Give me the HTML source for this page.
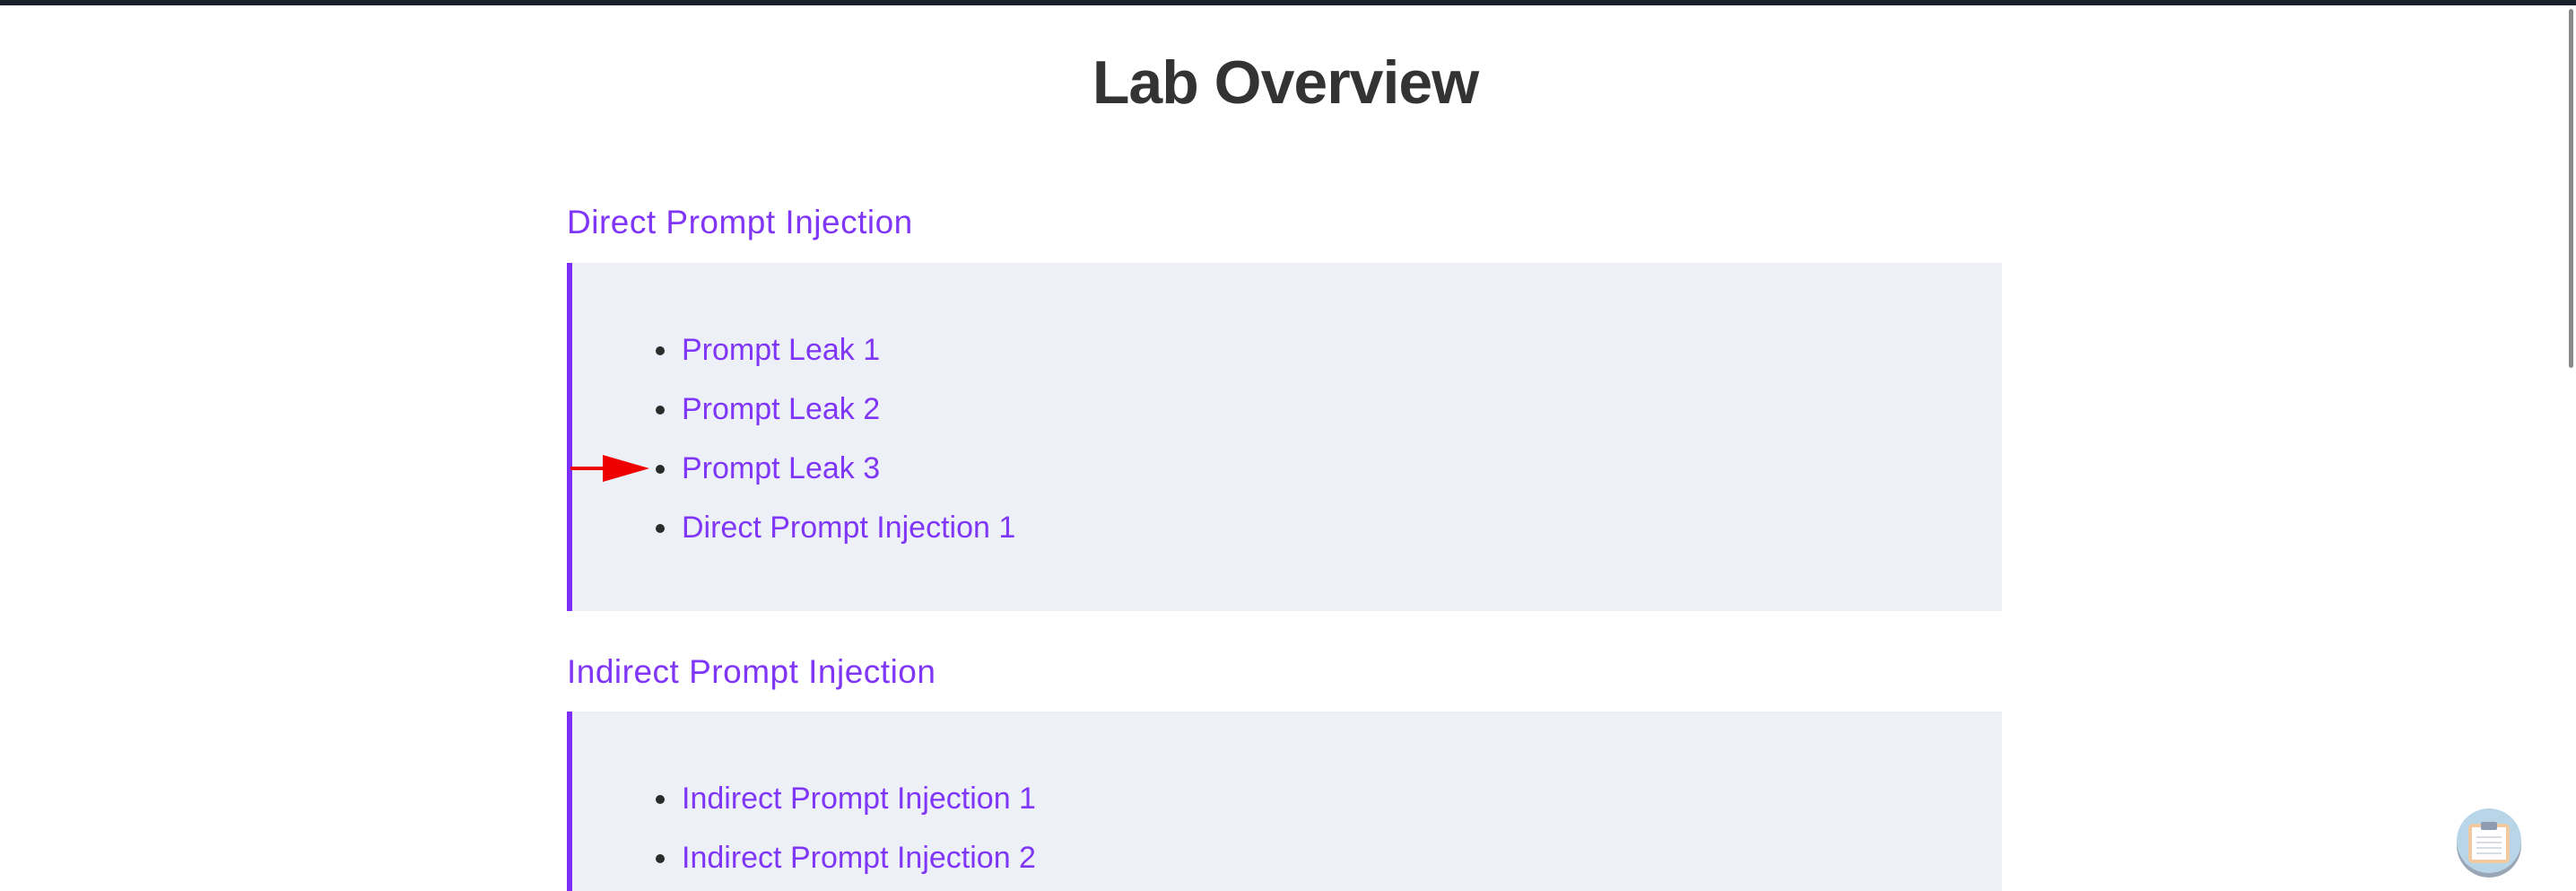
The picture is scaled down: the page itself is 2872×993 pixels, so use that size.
<!DOCTYPE html>
<html><head><meta charset="utf-8"><style>
html,body{margin:0;padding:0;}
body{width:2872px;height:978px;background:#fff;position:relative;overflow:hidden;font-family:"Liberation Sans","DejaVu Sans",sans-serif;}
.top{position:absolute;left:0;top:0;width:2872px;height:6px;background:#17202b;}
h1{position:absolute;left:0;width:2866px;top:50px;margin:0;text-align:center;font-size:68px;font-weight:bold;color:#333;line-height:84px;letter-spacing:-1px;}
.h2{position:absolute;left:632px;font-size:37px;color:#8036f7;line-height:44px;letter-spacing:0.5px;}
.box{position:absolute;left:632px;width:1600px;background:#edf1f7;border-left:6px solid #7b2ff7;box-sizing:border-box;}
.it{position:absolute;left:760px;font-size:34px;color:#8036f7;line-height:40px;}
.dot{position:absolute;left:731px;width:10px;height:10px;border-radius:50%;background:#2b2b2b;}
.sb{position:absolute;left:2864px;top:10px;width:5px;height:400px;background:#8a8a8a;border-radius:3px;}
</style></head><body>
<div class="top"></div>
<h1>Lab Overview</h1>
<div class="h2" style="top:226px">Direct Prompt Injection</div>
<div class="box" style="top:293px;height:388px"></div>
<div class="dot" style="top:386px"></div><div class="it" style="top:370px">Prompt Leak 1</div>
<div class="dot" style="top:452px"></div><div class="it" style="top:436px">Prompt Leak 2</div>
<div class="dot" style="top:518px"></div><div class="it" style="top:502px">Prompt Leak 3</div>
<div class="dot" style="top:584px"></div><div class="it" style="top:568px">Direct Prompt Injection 1</div>
<svg style="position:absolute;left:632px;top:500px" width="100" height="44"><rect x="4" y="20" width="40" height="4" fill="#ee0000"/><polygon points="40,7 92,22 40,37" fill="#ee0000"/></svg>
<div class="h2" style="top:727px">Indirect Prompt Injection</div>
<div class="box" style="top:793px;height:200px"></div>
<div class="dot" style="top:886px"></div><div class="it" style="top:870px">Indirect Prompt Injection 1</div>
<div class="dot" style="top:952px"></div><div class="it" style="top:936px">Indirect Prompt Injection 2</div>
<div class="sb"></div>
<svg style="position:absolute;left:2735px;top:900px" width="80" height="78">
<circle cx="40" cy="42" r="36" fill="#9aa6b6"/>
<circle cx="40" cy="37" r="36" fill="#b9d5e8"/>
<rect x="19" y="20" width="42" height="40" rx="3" fill="#fff" stroke="#f2c9a0" stroke-width="4"/>
<rect x="31" y="16" width="18" height="9" rx="2" fill="#8f9bb0"/>
<g stroke="#d8dde4" stroke-width="2"><line x1="26" y1="33" x2="54" y2="33"/><line x1="26" y1="39" x2="54" y2="39"/><line x1="26" y1="45" x2="54" y2="45"/><line x1="26" y1="51" x2="54" y2="51"/></g>
</svg>
</body></html>
